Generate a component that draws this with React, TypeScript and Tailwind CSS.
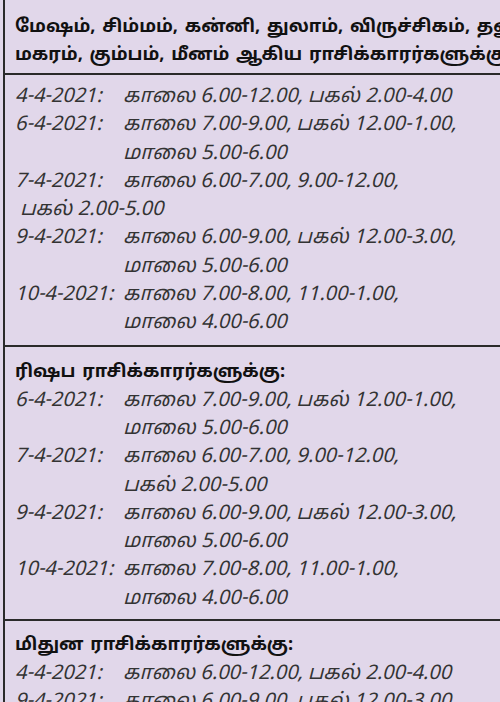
const font = {
  fontFamily: '"Noto Sans Tamil", "Lohit Tamil", "Liberation Sans", "Noto Sans", sans-serif',
};

type Row = { date?: string; text: string; indent?: boolean };

const sections: { title: string[]; rows: Row[]; pt: string; pb: string }[] = [
  {
    title: [
      "மேஷம், சிம்மம், கன்னி, துலாம், விருச்சிகம், தனுசு,",
      "மகரம், கும்பம், மீனம் ஆகிய ராசிக்காரர்களுக்கு:",
    ],
    pt: "pt-[14px]",
    pb: "pb-[7px]",
    rows: [
      { date: "4-4-2021:", text: "காலை 6.00-12.00, பகல் 2.00-4.00" },
      { date: "6-4-2021:", text: "காலை 7.00-9.00, பகல் 12.00-1.00," },
      { date: "", text: "மாலை 5.00-6.00" },
      { date: "7-4-2021:", text: "காலை 6.00-7.00, 9.00-12.00," },
      { text: "பகல் 2.00-5.00", indent: true },
      { date: "9-4-2021:", text: "காலை 6.00-9.00, பகல் 12.00-3.00," },
      { date: "", text: "மாலை 5.00-6.00" },
      { date: "10-4-2021:", text: "காலை 7.00-8.00, 11.00-1.00," },
      { date: "", text: "மாலை 4.00-6.00" },
    ],
  },
  {
    title: ["ரிஷப ராசிக்காரர்களுக்கு:"],
    pt: "pt-[12px]",
    pb: "pb-[6px]",
    rows: [
      { date: "6-4-2021:", text: "காலை 7.00-9.00, பகல் 12.00-1.00," },
      { date: "", text: "மாலை 5.00-6.00" },
      { date: "7-4-2021:", text: "காலை 6.00-7.00, 9.00-12.00," },
      { date: "", text: "பகல் 2.00-5.00" },
      { date: "9-4-2021:", text: "காலை 6.00-9.00, பகல் 12.00-3.00," },
      { date: "", text: "மாலை 5.00-6.00" },
      { date: "10-4-2021:", text: "காலை 7.00-8.00, 11.00-1.00," },
      { date: "", text: "மாலை 4.00-6.00" },
    ],
  },
  {
    title: ["மிதுன ராசிக்காரர்களுக்கு:"],
    pt: "pt-[11px]",
    pb: "pb-[6px]",
    rows: [
      { date: "4-4-2021:", text: "காலை 6.00-12.00, பகல் 2.00-4.00" },
      { date: "9-4-2021:", text: "காலை 6.00-9.00, பகல் 12.00-3.00," },
      { date: "", text: "மாலை 5.00-6.00" },
    ],
  },
];

function DateRow({ row }: { row: Row }) {
  if (row.indent) {
    return <div className="pl-[5px] whitespace-nowrap">{row.text}</div>;
  }
  return (
    <div className="flex whitespace-nowrap">
      <span className="shrink-0 min-w-[108px] pr-[7px]">{row.date}</span>
      <span>{row.text}</span>
    </div>
  );
}

export default function App() {
  return (
    <div className="w-[500px] h-[702px] overflow-hidden bg-[#e1d7ea] pl-[3px]" style={font}>
      <div className="h-full border-l-2 border-[#2a2a2a]">
        {sections.map((s, i) => (
          <div key={i} className={i > 0 ? "border-t-2 border-[#2a2a2a]" : ""}>
            <div
              className={`${s.pt} pl-[10px] text-[18px] leading-[28px] font-bold text-[#111] whitespace-nowrap [word-spacing:2px] ${
                i === 0 ? "pb-[3px] border-b-2 border-[#2a2a2a]" : ""
              }`}
            >
              {s.title.map((t) => (
                <div key={t}>{t}</div>
              ))}
            </div>
            <div
              className={`${i === 0 ? "pt-[8px]" : ""} ${s.pb} pl-[10px] text-[20px] leading-[28.3px] italic text-[#333]`}
            >
              {s.rows.map((r, j) => (
                <DateRow key={j} row={r} />
              ))}
            </div>
          </div>
        ))}
      </div>
    </div>
  );
}
